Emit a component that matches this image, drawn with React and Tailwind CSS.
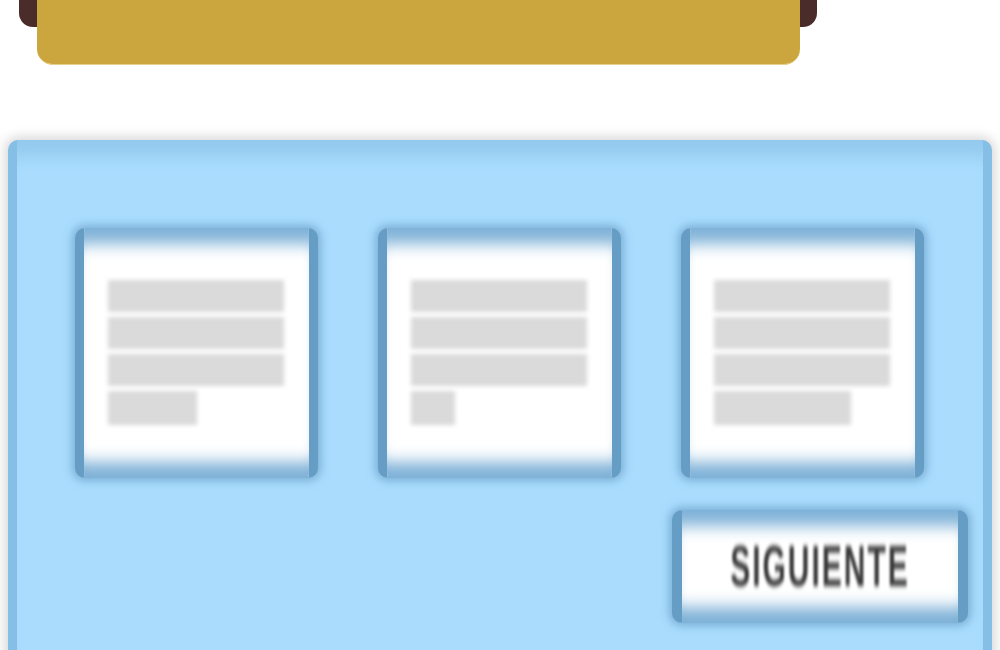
import React from 'react';

const CARDS = [
  { last: 89 },
  { last: 44 },
  { last: 137 },
];

const bevel =
  'shadow-[inset_0_28px_16px_-12px_#7fb2d8,inset_0_-28px_16px_-12px_#7fb2d8,0_0_8px_3px_#7cb0d6]';

function Card({ last }) {
  return (
    <div className={`w-[243px] h-[250px] rounded-[10px] border-x-[9px] border-[#659dc5] bg-white ${bevel}`}>
      <div className="flex flex-col gap-[5px] pt-[52px] px-[24px]">
        <div className="h-[32px] w-[176px] bg-[#dadada] blur-[2px]" />
        <div className="h-[32px] w-[176px] bg-[#dadada] blur-[2px]" />
        <div className="h-[32px] w-[176px] bg-[#dadada] blur-[2px]" />
        <div className="h-[34px] bg-[#dadada] blur-[2px]" style={{ width: last }} />
      </div>
    </div>
  );
}

export default function App() {
  return (
    <div className="h-[650px] overflow-hidden bg-white font-['Liberation_Sans',Arial,sans-serif]">
      {/* header */}
      <div className="ml-[19px] w-[798px] h-[27px] bg-[#4a2c2a] rounded-b-[14px]" />
      <div className="relative -mt-[27px] ml-[37px] w-[763px] h-[65px] bg-[#cba63e] rounded-b-[16px] border-b border-[#e6d08a]" />

      {/* panel */}
      <div className="mt-[75px] mx-[8px] h-[540px] rounded-t-[10px] border-x-[9px] border-[#85bfe6] bg-[#a9dcfd] shadow-[inset_0_28px_16px_-12px_#93caee,0_0_12px_3px_rgba(0,0,0,0.16)]">
        <div className="flex gap-[60px] pl-[58px] pt-[88px]">
          {CARDS.map((c, i) => (
            <Card key={i} last={c.last} />
          ))}
        </div>
        <div className="flex justify-end pr-[15px] pt-[32px]">
          <button
            className={`w-[296px] h-[113px] rounded-[10px] border-x-[10px] border-[#659dc5] bg-white flex items-center justify-center ${bevel}`}
          >
            <span className="inline-block text-[30px] leading-none font-bold tracking-[2px] text-[#3a3a3a] scale-y-[1.9] blur-[1.3px]">
              SIGUIENTE
            </span>
          </button>
        </div>
      </div>
    </div>
  );
}
